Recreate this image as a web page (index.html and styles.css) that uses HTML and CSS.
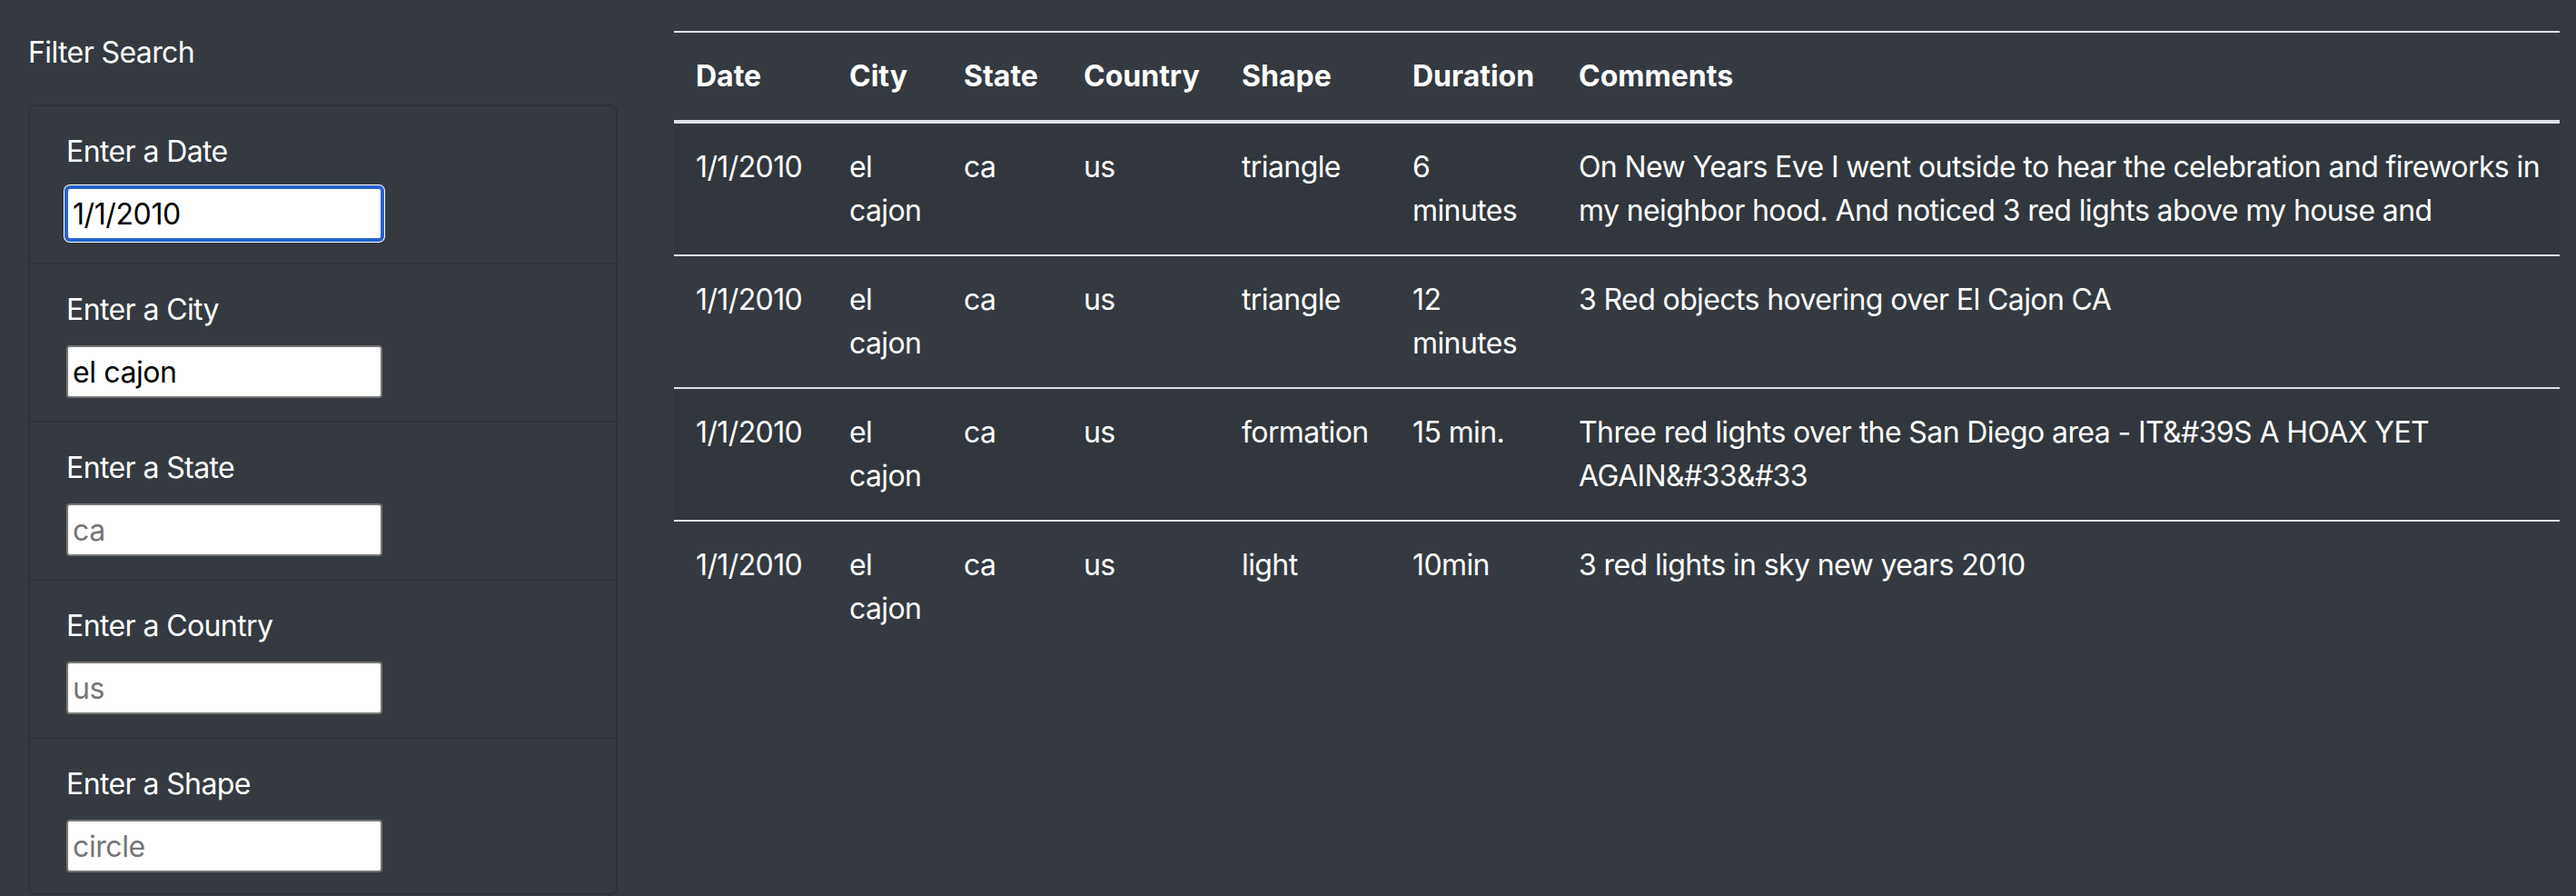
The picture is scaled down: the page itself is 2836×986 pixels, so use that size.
FILE: index.html
```html
<!DOCTYPE html>
<html lang="en">
<head>
<meta charset="utf-8">
<title>UFO Sightings</title>
<link rel="stylesheet" href="styles.css">
</head>
<body>
<div class="page">
  <aside class="sidebar">
    <div class="title">Filter Search</div>
    <div class="card">
      <ul class="filters">
        <li class="filter">
          <label for="datetime">Enter a Date</label>
          <input id="datetime" class="field is-active" type="text" value="1/1/2010" placeholder="1/1/2010">
        </li>
        <li class="filter">
          <label for="city">Enter a City</label>
          <input id="city" class="field" type="text" value="el cajon" placeholder="el cajon">
        </li>
        <li class="filter">
          <label for="state">Enter a State</label>
          <input id="state" class="field" type="text" placeholder="ca">
        </li>
        <li class="filter">
          <label for="country">Enter a Country</label>
          <input id="country" class="field" type="text" placeholder="us">
        </li>
        <li class="filter">
          <label for="shape">Enter a Shape</label>
          <input id="shape" class="field" type="text" placeholder="circle">
        </li>
      </ul>
    </div>
  </aside>
  <main class="results">
    <table class="ufo-table">
      <colgroup>
        <col class="c-date">
        <col class="c-city">
        <col class="c-state">
        <col class="c-country">
        <col class="c-shape">
        <col class="c-duration">
        <col class="c-comments">
      </colgroup>
      <thead>
        <tr>
          <th>Date</th>
          <th>City</th>
          <th>State</th>
          <th>Country</th>
          <th>Shape</th>
          <th>Duration</th>
          <th>Comments</th>
        </tr>
      </thead>
      <tbody>
        <tr>
          <td>1/1/2010</td>
          <td>el cajon</td>
          <td>ca</td>
          <td>us</td>
          <td>triangle</td>
          <td>6 minutes</td>
          <td><span class="ln">On New Years Eve I went outside to hear the celebration and fireworks in</span> <span class="ln">my neighbor hood. And noticed 3 red lights above my house and</span></td>
        </tr>
        <tr>
          <td>1/1/2010</td>
          <td>el cajon</td>
          <td>ca</td>
          <td>us</td>
          <td>triangle</td>
          <td>12 minutes</td>
          <td>3 Red objects hovering over El Cajon CA</td>
        </tr>
        <tr>
          <td>1/1/2010</td>
          <td>el cajon</td>
          <td>ca</td>
          <td>us</td>
          <td>formation</td>
          <td>15 min.</td>
          <td><span class="ln">Three red lights over the San Diego area - IT&amp;#39S A HOAX YET</span> <span class="ln">AGAIN&amp;#33&amp;#33</span></td>
        </tr>
        <tr>
          <td>1/1/2010</td>
          <td>el cajon</td>
          <td>ca</td>
          <td>us</td>
          <td>light</td>
          <td>10min</td>
          <td>3 red lights in sky new years 2010</td>
        </tr>
      </tbody>
    </table>
  </main>
</div>
</body>
</html>
```

FILE: styles.css
```css
html, body {
  margin: 0;
  padding: 0;
  background: #343a40;
}

body {
  font-family: Inter, "Noto Sans", "Liberation Sans", sans-serif;
  font-size: 32px;
  line-height: 48px;
  letter-spacing: -0.6px;
  color: #fff;
}

.page {
  display: flex;
  align-items: flex-start;
  padding-top: 34px;
}

.sidebar {
  flex: none;
  width: 649px;
  padding: 0 29px 0 31px;
}

.title {
  line-height: 48px;
  margin-bottom: 33px;
}

.card {
  border: 2px solid rgba(0, 0, 0, 0.125);
  border-radius: 8px;
}

.filters {
  list-style: none;
  margin: 0;
  padding: 0;
}

.filter {
  padding: 26px 40px 25px;
  border-bottom: 2px solid rgba(0, 0, 0, 0.125);
}

.filter:last-child {
  border-bottom: 0;
  padding-bottom: 23px;
}

.filter label {
  display: block;
  margin-bottom: 15px;
}

.field {
  display: block;
  box-sizing: border-box;
  width: 348px;
  height: 58px;
  margin: 0;
  padding: 0 5px;
  border: 2px solid #767676;
  border-radius: 4px;
  background: #fff;
  color: #000;
  font-family: Inter, "Noto Sans", "Liberation Sans", sans-serif;
  font-size: 32px;
  letter-spacing: -0.4px;
  outline: none;
}

.field::placeholder {
  color: #757575;
  opacity: 1;
}

.field.is-active {
  border-color: #2663cc;
  box-shadow: 0 0 0 2px #2663cc, 0 0 0 3px #fff;
}

.results {
  flex: 1;
  min-width: 0;
  padding: 0 18px 0 33px;
}

.ufo-table {
  width: 100%;
  border-collapse: collapse;
  table-layout: fixed;
}

.c-date { width: 169px; }
.c-city { width: 126px; }
.c-state { width: 132px; }
.c-country { width: 174px; }
.c-shape { width: 188px; }
.c-duration { width: 183px; }

.ufo-table th,
.ufo-table td {
  padding: 24px;
  text-align: left;
  vertical-align: top;
  border-top: 2px solid #dee2e6;
}

.ufo-table th {
  font-weight: 700;
  letter-spacing: 0;
  border-bottom: 4px solid #dee2e6;
}

.ufo-table tbody tr:nth-child(odd) {
  background: rgba(0, 0, 0, 0.05);
}

.ln {
  white-space: nowrap;
}
```
